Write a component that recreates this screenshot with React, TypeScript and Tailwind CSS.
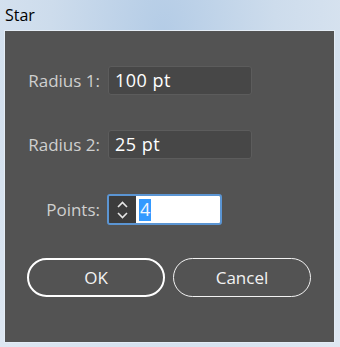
import React from "react";

const Field = ({ label, value }: { label: string; value: string }) => (
  <div className="flex items-center">
    <div className="w-[103px] pr-[8px] text-right text-[17px] text-[#cfcfcf]">{label}</div>
    <div className="flex h-[29px] w-[144px] items-center rounded-[3px] border border-[#5c5c5c] bg-[#474747] px-[6px] text-[18px] tracking-[0.5px] text-white">
      {value}
    </div>
  </div>
);

const App = () => {
  return (
    <div
      className="h-[347px] w-[340px] overflow-hidden bg-[radial-gradient(ellipse_at_48%_10%,#b4cce6_0%,#cddcec_45%,#dfe8f2_100%)]"
      style={{ fontFamily: "'Open Sans', 'Noto Sans', sans-serif" }}
    >
      {/* title bar */}
      <div className="h-[30px] pl-[5px] pt-[3px] text-[16px] text-black">Star</div>

      {/* dialog body */}
      <div className="ml-[4px] flex h-[313px] w-[331px] flex-col border border-[#e4edf6] bg-[#535353] pt-[35px]">
        <Field label="Radius 1:" value="100 pt" />
        <div className="h-[35px]" />
        <Field label="Radius 2:" value="25 pt" />
        <div className="h-[35px]" />

        <div className="flex items-center">
          <div className="w-[102px] pr-[7px] text-right text-[17px] text-[#cfcfcf]">Points:</div>
          <div className="flex h-[31px] w-[115px] overflow-hidden rounded-[3px] border-2 border-[#5b95d3]">
            <div className="flex w-[27px] flex-col items-center justify-center gap-[4px] bg-[#3c3c3c]">
              <svg width="11" height="7" viewBox="0 0 11 7" fill="none" stroke="#e6e6e6" strokeWidth="1.6">
                <path d="M1 6 L5.5 1.5 L10 6" />
              </svg>
              <svg width="11" height="7" viewBox="0 0 11 7" fill="none" stroke="#e6e6e6" strokeWidth="1.6">
                <path d="M1 1 L5.5 5.5 L10 1" />
              </svg>
            </div>
            <div className="flex flex-1 items-center bg-white pl-[3px]">
              <span className="flex h-[22px] items-center bg-[#3399ff] px-[1px] text-[18px] text-[#f0f6ff]">4</span>
            </div>
          </div>
        </div>

        <div className="mt-[33px] flex gap-[8px] pl-[22px]">
          <button className="h-[39px] w-[138px] rounded-full border-[2.5px] border-white text-[17px] text-[#f2f2f2]">
            OK
          </button>
          <button className="h-[39px] w-[138px] rounded-full border-[1.5px] border-[#f2f2f2] text-[17px] text-[#f2f2f2]">
            Cancel
          </button>
        </div>
      </div>
    </div>
  );
};

export default App;
